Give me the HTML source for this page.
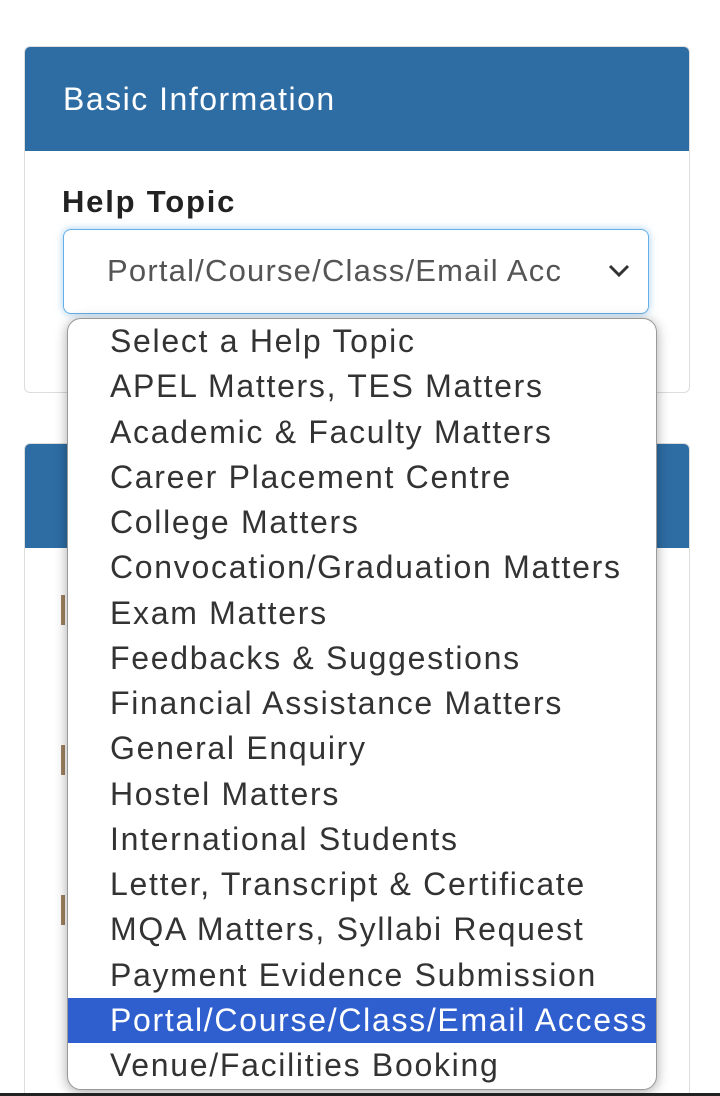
<!DOCTYPE html>
<html><head><style>
html,body{margin:0;width:720px;height:1096px;overflow:hidden}
body{background:#fff;position:relative;font-family:"Liberation Sans",Arial,sans-serif;}
.card{position:absolute;left:24px;width:664px;border:1px solid #ddd;border-radius:6px;background:#fff;}
.hd{background:#2e6da4;height:104px;border-radius:5px 5px 0 0;color:#fff;font-size:32px;line-height:104px;padding-left:38px;letter-spacing:1.5px}
.lbl{position:absolute;left:62px;top:184px;font-weight:bold;font-size:31px;color:#222;letter-spacing:1.8px}
.sel{position:absolute;left:63px;top:229px;width:584px;height:83px;border:1px solid #66afe9;border-radius:8px;box-shadow:0 0 8px rgba(102,175,233,.6);background:#fff;}
.sel span{position:absolute;left:43px;top:23px;font-size:31px;color:#555;width:455px;overflow:hidden;white-space:nowrap;letter-spacing:1.2px}
.dd{position:absolute;left:67px;top:318px;width:588px;height:770px;background:#fff;border:1px solid #999;border-radius:14px;box-shadow:0 2px 12px rgba(0,0,0,.35);overflow:hidden}
.dd div{height:45.25px;line-height:45px;font-size:32px;color:#333;padding-left:42px;white-space:nowrap;letter-spacing:1.7px}
.dd .on{background:#2f5fcf;color:#fff}
</style></head><body>
<div class="card" style="top:46px;height:345px"><div class="hd">Basic Information</div></div>
<div class="card" style="top:443px;height:700px"><div class="hd"></div></div>
<div style="position:absolute;left:61px;top:595px;width:4px;height:30px;background:#a08060"></div>
<div style="position:absolute;left:61px;top:745px;width:4px;height:30px;background:#a08060"></div>
<div style="position:absolute;left:61px;top:895px;width:4px;height:30px;background:#a08060"></div>
<div class="lbl">Help Topic</div>
<div class="sel"><span>Portal/Course/Class/Email Access</span>
<svg style="position:absolute;left:544px;top:34px" width="22" height="14" viewBox="0 0 22 14"><path d="M2 2 L11 11 L20 2" fill="none" stroke="#333" stroke-width="3"/></svg></div>
<div class="dd">
<div>Select a Help Topic</div>
<div>APEL Matters, TES Matters</div>
<div>Academic &amp; Faculty Matters</div>
<div>Career Placement Centre</div>
<div>College Matters</div>
<div>Convocation/Graduation Matters</div>
<div>Exam Matters</div>
<div>Feedbacks &amp; Suggestions</div>
<div>Financial Assistance Matters</div>
<div>General Enquiry</div>
<div>Hostel Matters</div>
<div>International Students</div>
<div>Letter, Transcript &amp; Certificate</div>
<div>MQA Matters, Syllabi Request</div>
<div>Payment Evidence Submission</div>
<div class="on">Portal/Course/Class/Email Access</div>
<div>Venue/Facilities Booking</div>
</div>
<div style="position:absolute;left:0;top:1093px;width:720px;height:3px;background:#222"></div>
</body></html>
